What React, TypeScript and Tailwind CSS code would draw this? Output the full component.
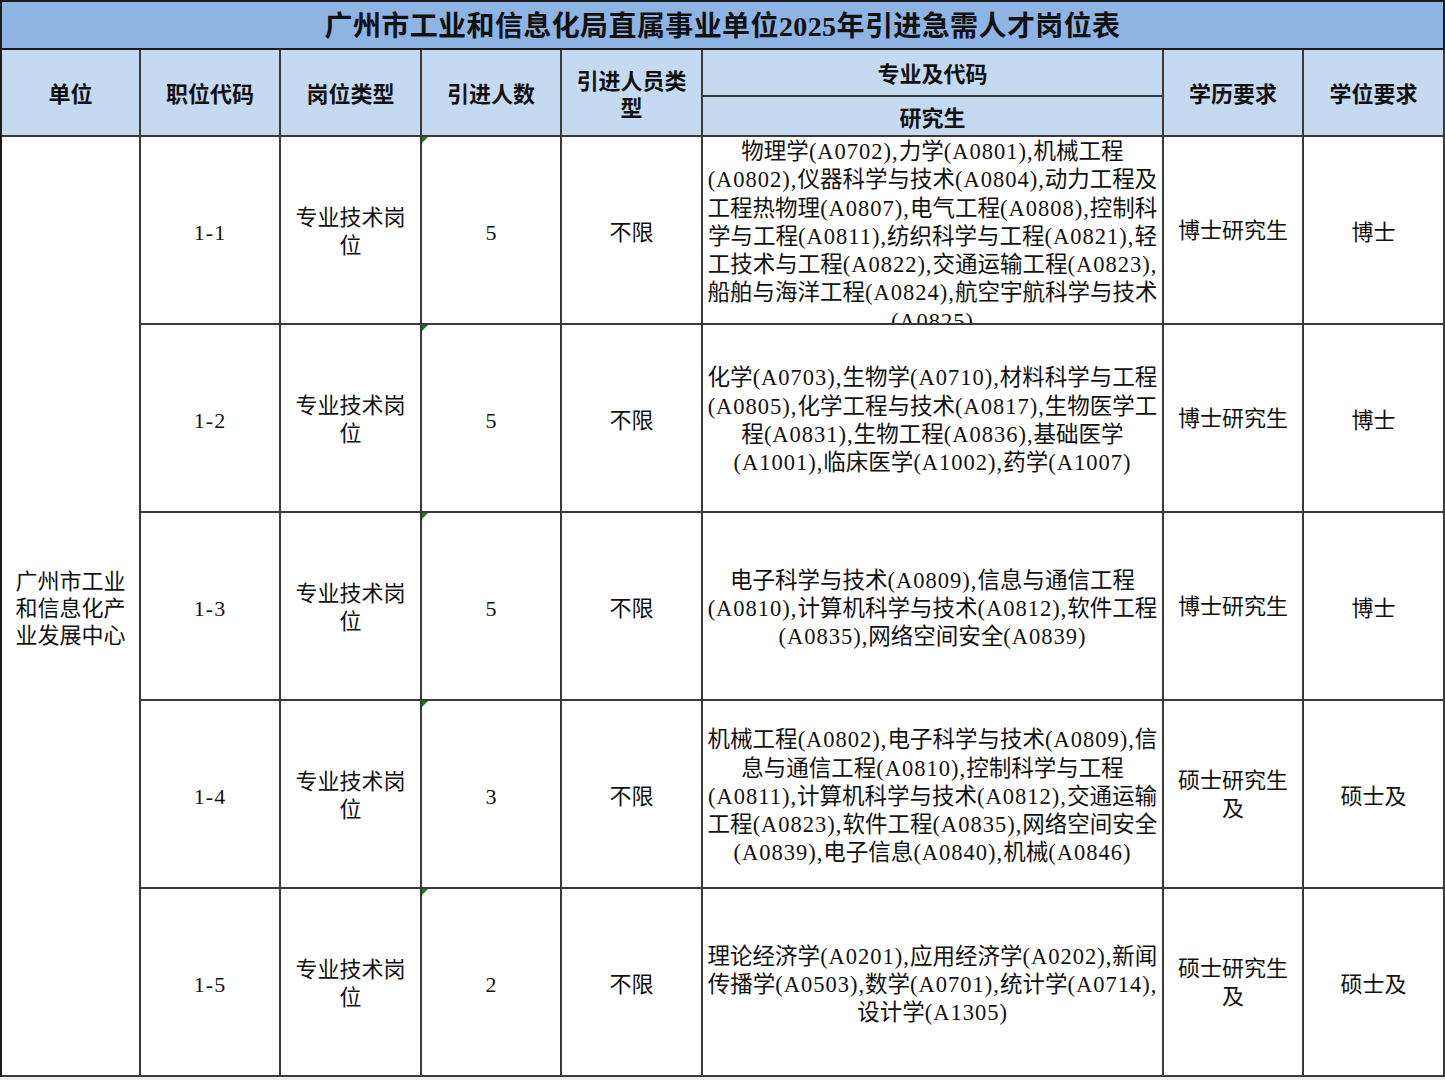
import React from "react";

const FONT = { fontFamily: '"Liberation Serif", "Noto Sans CJK SC", serif' } as React.CSSProperties;

type Row = {
  code: string;
  num: string;
  lines: string[];
  edu: string[];
  degree: string;
  top?: boolean;
};

const rows: Row[] = [
  {
    code: "1-1",
    num: "5",
    top: true,
    lines: [
      "物理学(A0702),力学(A0801),机械工程",
      "(A0802),仪器科学与技术(A0804),动力工程及",
      "工程热物理(A0807),电气工程(A0808),控制科",
      "学与工程(A0811),纺织科学与工程(A0821),轻",
      "工技术与工程(A0822),交通运输工程(A0823),",
      "船舶与海洋工程(A0824),航空宇航科学与技术",
      "(A0825)",
    ],
    edu: ["博士研究生"],
    degree: "博士",
  },
  {
    code: "1-2",
    num: "5",
    lines: [
      "化学(A0703),生物学(A0710),材料科学与工程",
      "(A0805),化学工程与技术(A0817),生物医学工",
      "程(A0831),生物工程(A0836),基础医学",
      "(A1001),临床医学(A1002),药学(A1007)",
    ],
    edu: ["博士研究生"],
    degree: "博士",
  },
  {
    code: "1-3",
    num: "5",
    lines: [
      "电子科学与技术(A0809),信息与通信工程",
      "(A0810),计算机科学与技术(A0812),软件工程",
      "(A0835),网络空间安全(A0839)",
    ],
    edu: ["博士研究生"],
    degree: "博士",
  },
  {
    code: "1-4",
    num: "3",
    lines: [
      "机械工程(A0802),电子科学与技术(A0809),信",
      "息与通信工程(A0810),控制科学与工程",
      "(A0811),计算机科学与技术(A0812),交通运输",
      "工程(A0823),软件工程(A0835),网络空间安全",
      "(A0839),电子信息(A0840),机械(A0846)",
    ],
    edu: ["硕士研究生", "及"],
    degree: "硕士及",
  },
  {
    code: "1-5",
    num: "2",
    lines: [
      "理论经济学(A0201),应用经济学(A0202),新闻",
      "传播学(A0503),数学(A0701),统计学(A0714),",
      "设计学(A1305)",
    ],
    edu: ["硕士研究生", "及"],
    degree: "硕士及",
  },
];

function Mixed({ text }: { text: string }) {
  const parts = text.split(/([\x00-\x7f]+)/).filter((p) => p.length > 0);
  return (
    <>
      {parts.map((p, i) =>
        /^[\x00-\x7f]+$/.test(p) ? (
          <span key={i} className="tracking-[1px]">
            {p}
          </span>
        ) : (
          <span key={i}>{p}</span>
        )
      )}
    </>
  );
}

const cell = "border-r-2 border-b-2 border-[#3a3a3a] flex flex-col items-center justify-center text-center overflow-hidden";

export default function App() {
  return (
    <div className="w-[1445px] h-[1080px] bg-[#eeeeee] overflow-hidden" style={FONT}>
      <div
        className="grid border-l-2 border-t-2 border-[#1a1a1a] text-[#111] bg-white"
        style={{
          gridTemplateColumns: "139px 140px 141px 140px 141px 461px 140px 141px",
          gridTemplateRows: "48px 47px 40px 188px 188px 188px 188px 188px",
        }}
      >
        {/* Title */}
        <div className="col-span-8 bg-[#8db4e2] border-r-2 border-b-2 border-[#1a1a1a] flex items-center justify-center text-[28px] font-bold tracking-[0.4px] pt-[3px]">
          广州市工业和信息化局直属事业单位2025年引进急需人才岗位表
        </div>

        {/* Header */}
        <div className={`${cell} row-span-2 bg-[#c5d9f1] text-[22px] font-bold pt-[4px]`}>单位</div>
        <div className={`${cell} row-span-2 bg-[#c5d9f1] text-[22px] font-bold pt-[4px]`}>职位代码</div>
        <div className={`${cell} row-span-2 bg-[#c5d9f1] text-[22px] font-bold pt-[4px]`}>岗位类型</div>
        <div className={`${cell} row-span-2 bg-[#c5d9f1] text-[22px] font-bold pt-[4px]`}>引进人数</div>
        <div className={`${cell} row-span-2 bg-[#c5d9f1] text-[22px] font-bold leading-[27px] px-[8px] pt-[5px]`}>
          <span>引进人员类</span>
          <span>型</span>
        </div>
        <div className={`${cell} bg-[#c5d9f1] text-[22px] font-bold pt-[4px]`}>专业及代码</div>
        <div className={`${cell} row-span-2 bg-[#c5d9f1] text-[22px] font-bold pt-[4px]`}>学历要求</div>
        <div className={`${cell} row-span-2 bg-[#c5d9f1] text-[22px] font-bold pt-[4px]`}>学位要求</div>
        <div className={`${cell} bg-[#c5d9f1] text-[22px] font-bold pt-[5px]`}>研究生</div>

        {/* Unit merged cell */}
        <div className={`${cell} row-span-5 text-[22px] leading-[27px] px-[8px] pt-[5px]`}>
          <span>广州市工业</span>
          <span>和信息化产</span>
          <span>业发展中心</span>
        </div>

        {rows.map((r) => (
          <React.Fragment key={r.code}>
            <div className={`${cell} text-[22px] pt-[4px] tracking-[1px]`}>{r.code}</div>
            <div className={`${cell} text-[22px] leading-[28px] pt-[4px]`}>
              <span>专业技术岗</span>
              <span>位</span>
            </div>
            <div className={`${cell} relative text-[22px] pt-[4px]`}>
              <span>{r.num}</span>
              <span className="absolute left-0 top-0 w-0 h-0 border-t-[6px] border-r-[6px] border-t-[#1f7a1f] border-r-transparent" />
            </div>
            <div className={`${cell} text-[22px] pt-[4px]`}>不限</div>
            <div
              className={`${cell} text-[22.5px] leading-[28.3px] ${r.top ? "justify-start pt-[1px]" : "pt-[6px]"}`}
            >
              {r.lines.map((l, i) => (
                <span key={i} className="whitespace-nowrap block">
                  <Mixed text={l} />
                </span>
              ))}
            </div>
            <div className={`${cell} text-[22px] leading-[28px] pt-[2px]`}>
              {r.edu.map((e, i) => (
                <span key={i}>{e}</span>
              ))}
            </div>
            <div className={`${cell} text-[22px] pt-[4px]`}>{r.degree}</div>
          </React.Fragment>
        ))}
      </div>
    </div>
  );
}
